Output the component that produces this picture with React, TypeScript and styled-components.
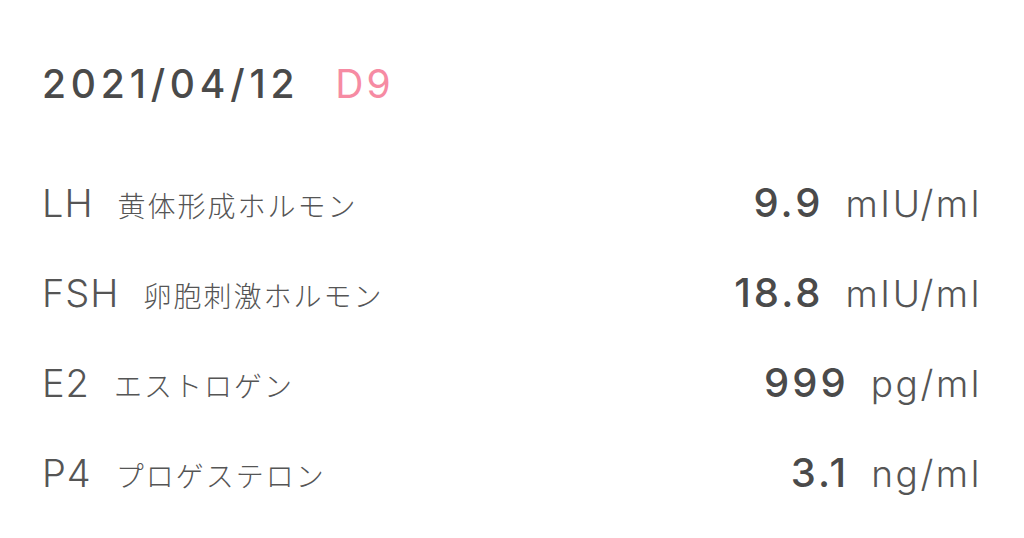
import styled, { createGlobalStyle } from "styled-components";

type Hormone = {
  code: string;
  name: string;
  value: string;
  unit: string;
};

const hormones: Hormone[] = [
  { code: "LH", name: "黄体形成ホルモン", value: "9.9", unit: "mIU/ml" },
  { code: "FSH", name: "卵胞刺激ホルモン", value: "18.8", unit: "mIU/ml" },
  { code: "E2", name: "エストロゲン", value: "999", unit: "pg/ml" },
  { code: "P4", name: "プロゲステロン", value: "3.1", unit: "ng/ml" },
];

const GlobalStyle = createGlobalStyle`
  body {
    margin: 0;
    background: #fff;
    font-family: Inter, "Noto Sans CJK JP", sans-serif;
    color: #4a4a4a;
  }
`;

const App = () => {
  return (
    <>
      <GlobalStyle />
      <Card>
        <Header>
          <DateText>2021/04/12</DateText>
          <DayText>D9</DayText>
        </Header>
        <List>
          {hormones.map((h) => (
            <Row key={h.code}>
              <Label>
                <Code>{h.code}</Code>
                <Name>{h.name}</Name>
              </Label>
              <Reading>
                <Value>{h.value}</Value>
                <Unit>{h.unit}</Unit>
              </Reading>
            </Row>
          ))}
        </List>
      </Card>
    </>
  );
};

export default App;

const Card = styled.div`
  width: 1024px;
  height: 538px;
  box-sizing: border-box;
  padding: 60px 42px 0 42px;
  display: flex;
  flex-direction: column;
`;

const Header = styled.div`
  display: flex;
  align-items: baseline;
  gap: 36px;
  height: 56px;
`;

const DateText = styled.span`
  font-size: 39px;
  font-weight: 500;
  letter-spacing: 4.8px;
  color: #4a4a4a;
`;

const DayText = styled.span`
  font-size: 39px;
  font-weight: 400;
  letter-spacing: 3px;
  color: #f68ba3;
`;

const List = styled.div`
  margin-top: 64px;
  display: flex;
  flex-direction: column;
`;

const Row = styled.div`
  display: flex;
  align-items: baseline;
  justify-content: space-between;
  height: 90px;
`;

const Label = styled.div`
  display: flex;
  align-items: baseline;
  gap: 24px;
`;

const Code = styled.span`
  font-size: 38px;
  font-weight: 300;
  letter-spacing: 1px;
  color: #555;
`;

const Name = styled.span`
  font-family: "Noto Sans CJK JP", sans-serif;
  font-size: 28px;
  font-weight: 300;
  letter-spacing: 2px;
  color: #555;
`;

const Reading = styled.div`
  display: flex;
  align-items: baseline;
  gap: 22px;
`;

const Value = styled.span`
  font-size: 40px;
  font-weight: 500;
  letter-spacing: 3px;
  color: #4a4a4a;
`;

const Unit = styled.span`
  font-size: 37px;
  font-weight: 300;
  letter-spacing: 2.6px;
  color: #555;
`;
